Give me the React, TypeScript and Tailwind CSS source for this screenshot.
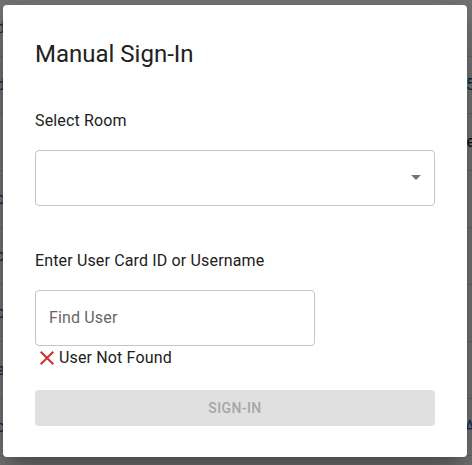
import React from "react";

const rows: { left?: string; leftColor?: string; right?: string; rightColor?: string }[] = [
  { left: "d", leftColor: "text-[#1565c0]" },
  { left: "d", leftColor: "text-[#1565c0]", right: "5", rightColor: "text-[#1565c0]" },
  { right: "e", rightColor: "text-[#212121]" },
  { left: "o", leftColor: "text-[#1565c0]" },
  { left: "o", leftColor: "text-[#1565c0]" },
  { left: "o", leftColor: "text-[#1565c0]" },
  { left: "e", leftColor: "text-[#1565c0]" },
  { left: "c", leftColor: "text-[#1565c0]", right: "A", rightColor: "text-[#1565c0]" },
  {},
];

export default function App() {
  return (
    <div
      className="relative w-[472px] h-[465px] overflow-hidden bg-white"
      style={{ fontFamily: "Roboto, 'Noto Sans', Arial, sans-serif" }}
    >
      {/* background page */}
      <div className="flex flex-col">
        {rows.map((r, i) => (
          <div
            key={i}
            className="flex h-[57px] items-center justify-between border-b border-[#e0e0e0] text-[16px]"
          >
            <span className={`-ml-[4px] ${r.leftColor ?? ""}`}>{r.left ?? ""}</span>
            <span className={`-mr-[3px] ${r.rightColor ?? ""}`}>{r.right ?? ""}</span>
          </div>
        ))}
      </div>

      {/* backdrop */}
      <div className="absolute inset-0 bg-[rgba(0,0,0,0.54)]">
        <div className="ml-[3px] mt-[5px] flex w-[464px] flex-col rounded-[4px] bg-white px-8 pt-[33px] pb-[31px] shadow-[0_11px_15px_-7px_rgba(0,0,0,0.2),0_24px_38px_3px_rgba(0,0,0,0.14),0_9px_46px_8px_rgba(0,0,0,0.12)]">
          <h2 className="text-[24px] leading-[32px] font-normal text-[#212121]">Manual Sign-In</h2>

          <div className="mt-[39px] text-[16px] leading-6 tracking-[0.15px] text-[#212121]">Select Room</div>
          <div className="relative mt-[17px] h-14 w-[400px] rounded-[4px] border border-[#c4c4c4]">
            <svg
              className="absolute right-[6px] top-[14px] h-6 w-6 fill-[#757575]"
              viewBox="0 0 24 24"
            >
              <path d="M7 10l5 5 5-5z" />
            </svg>
          </div>

          <div className="mt-[43px] text-[16px] leading-6 tracking-[0.15px] text-[#212121]">
            Enter User Card ID or Username
          </div>
          <div className="mt-[17px] flex h-14 w-[280px] items-center rounded-[4px] border border-[#c4c4c4] pl-[13px]">
            <span className="text-[16px] leading-6 tracking-[0.15px] text-[#666666]">Find User</span>
          </div>

          <div className="flex h-6 items-center text-[16px] leading-6 tracking-[0.15px] text-[#212121]">
            <svg className="h-6 w-6 fill-[#d32f2f]" viewBox="0 0 24 24">
              <path d="M19 6.41 17.59 5 12 10.59 6.41 5 5 6.41 10.59 12 5 17.59 6.41 19 12 13.41 17.59 19 19 17.59 13.41 12z" />
            </svg>
            <span>User Not Found</span>
          </div>

          <button
            className="mt-5 flex h-9 w-[400px] items-center justify-center rounded-[4px] bg-[#e0e0e0] text-[14px] font-medium uppercase tracking-[0.4px] text-[#a6a6a6]"
            disabled
          >
            Sign-In
          </button>
        </div>
      </div>
    </div>
  );
}
